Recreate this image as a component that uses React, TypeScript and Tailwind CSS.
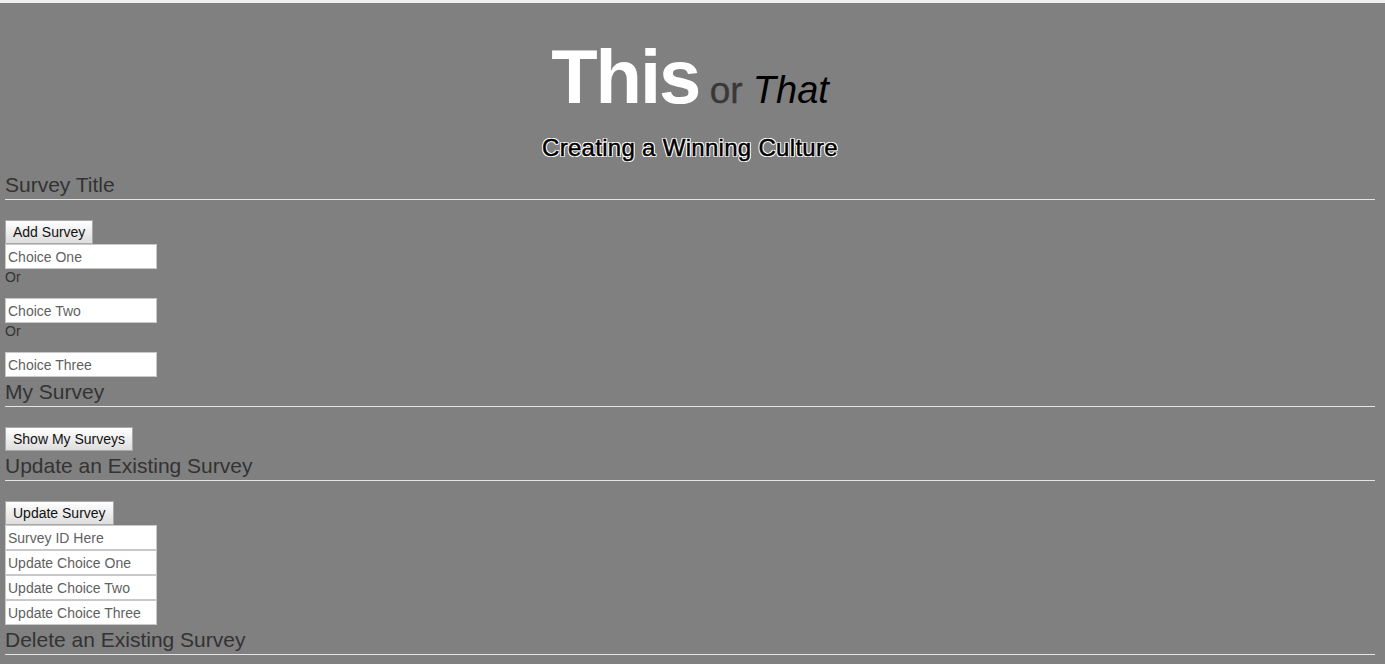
import React from "react";

const font = { fontFamily: '"Liberation Sans", Arial, Helvetica, sans-serif' };

function Heading({ children }: { children: React.ReactNode }) {
  return (
    <h3 className="text-[21px] leading-[29px] text-[#333333] border-b border-[#e4e4e4] font-normal">
      {children}
    </h3>
  );
}

function Btn({ children }: { children: React.ReactNode }) {
  return (
    <button className="block h-[24px] px-[7px] border border-[#a9a9a9] bg-gradient-to-b from-white to-[#dddddd] text-[14px] leading-[17px] text-[#111111]">
      {children}
    </button>
  );
}

function Field({ ph }: { ph: string }) {
  return (
    <input
      placeholder={ph}
      className="block w-[152px] h-[25px] border border-[#c8c8c8] bg-white px-[2px] text-[14px] text-[#333] placeholder:text-[#5f5f5f] outline-none"
    />
  );
}

function Or() {
  return <div className="text-[14px] leading-[17px] text-[#333333] mb-[12px]">Or</div>;
}

export default function App() {
  return (
    <div style={font} className="min-h-[664px] bg-[#808080] border-t-[3px] border-[#efefef]">
      <div className="pl-[5px] pr-[10px] pb-[20px]">
        <h1 className="pt-[36px] text-center text-[76px] leading-[76px] font-bold text-white tracking-[-2px]">
          This
          <span className="text-[37px] leading-none font-normal text-[#383838] tracking-normal [-webkit-text-stroke:0.4px_#383838]"> or </span>
          <span className="text-[38px] leading-none font-normal italic text-black tracking-normal">That</span>
        </h1>
        <div className="mt-[19px] text-center text-[24px] leading-[28px] tracking-[0.3px] text-black [-webkit-text-stroke:0.5px_black] [text-shadow:-1px_-1px_0_#fff,1px_-1px_0_#fff,-1px_1px_0_#fff,1px_1px_0_#fff,0_1px_0_#fff,0_-1px_0_#fff,1px_0_0_#fff,-1px_0_0_#fff]">
          Creating a Winning Culture
        </div>
        <div className="mt-[8px]">
          <Heading>Survey Title</Heading>
          <div className="mt-[20px]">
            <Btn>Add Survey</Btn>
            <Field ph="Choice One" />
            <Or />
            <Field ph="Choice Two" />
            <Or />
            <Field ph="Choice Three" />
          </div>
          <Heading>My Survey</Heading>
          <div className="mt-[20px]">
            <Btn>Show My Surveys</Btn>
          </div>
          <Heading>Update an Existing Survey</Heading>
          <div className="mt-[20px]">
            <Btn>Update Survey</Btn>
            <Field ph="Survey ID Here" />
            <Field ph="Update Choice One" />
            <Field ph="Update Choice Two" />
            <Field ph="Update Choice Three" />
          </div>
          <Heading>Delete an Existing Survey</Heading>
        </div>
      </div>
    </div>
  );
}
